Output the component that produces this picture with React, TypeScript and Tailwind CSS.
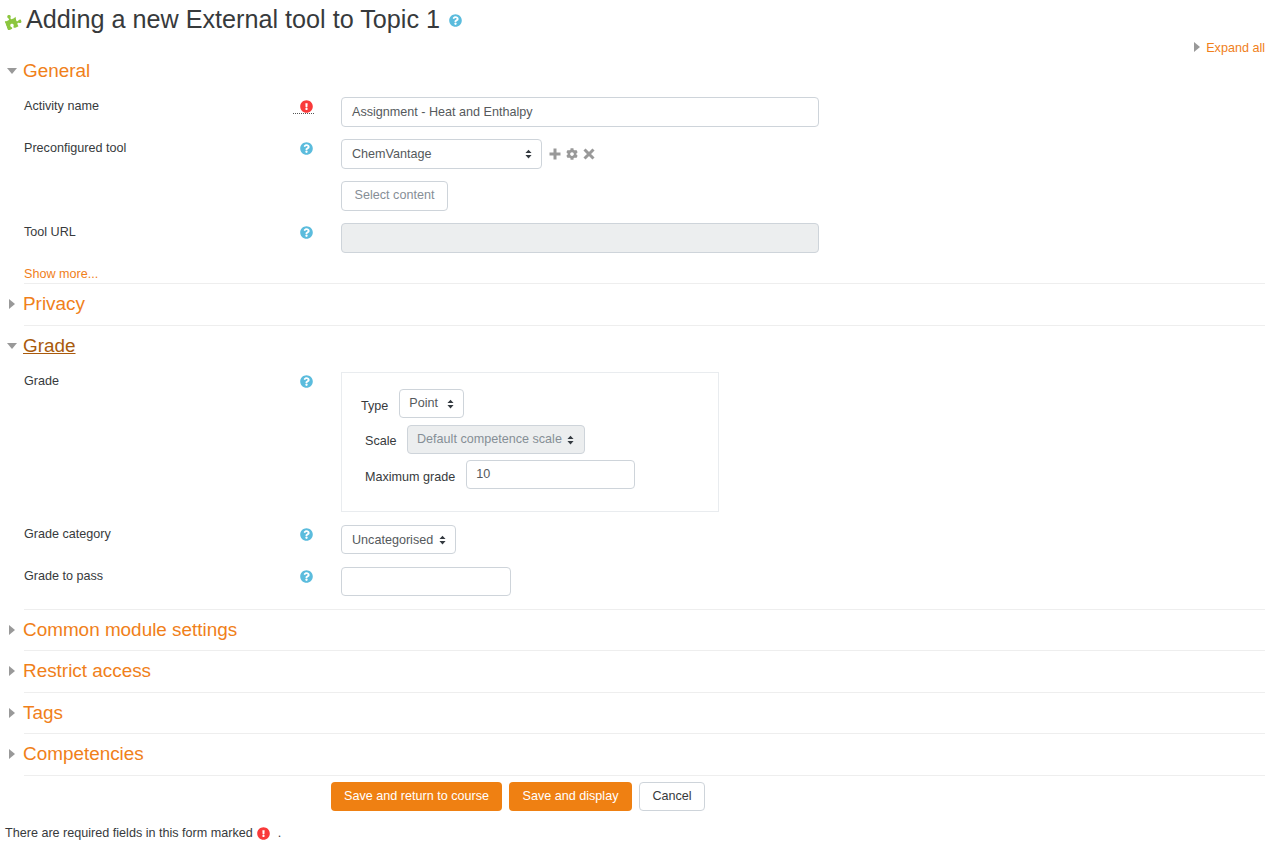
import { FaCog, FaExclamationCircle, FaPuzzlePiece, FaQuestionCircle } from "react-icons/fa";

function Help() {
  return <FaQuestionCircle size={13} className="text-[#5bbcdd]" />;
}

function Arrows() {
  return (
    <svg width="7" height="10" viewBox="0 0 8 11" className="shrink-0">
      <path d="M4 0.5 L7.5 4.3 H0.5 Z M4 10.5 L0.5 6.7 H7.5 Z" fill="#343a40" />
    </svg>
  );
}

function Closed() {
  return (
    <svg width="6" height="10" viewBox="0 0 6 10" className="shrink-0 -mt-[1px]">
      <path d="M0 0 L6 5 L0 10 Z" fill="#999" />
    </svg>
  );
}

function Open() {
  return (
    <svg width="10" height="6" viewBox="0 0 10 6" className="shrink-0">
      <path d="M0 0 H10 L5 6 Z" fill="#999" />
    </svg>
  );
}

function Section({ title, open, under, h }: { title: string; open?: boolean; under?: boolean; h: string }) {
  return (
    <div className={`flex items-center ${h}`}>
      <div className="w-[24px] flex justify-center shrink-0">
        {open ? <Open /> : <Closed />}
      </div>
      <span className={`text-[18.9px] -ml-[1px] ${under ? "text-[#a95a0c] underline" : "text-[#f0801a]"}`}>{title}</span>
    </div>
  );
}

function Row({ label, icon, children, cls }: { label: string; icon?: React.ReactNode; children: React.ReactNode; cls?: string }) {
  return (
    <div className={`flex pl-[24px] ${cls ?? ""}`}>
      <div className="w-[276px] pt-[1px] leading-[17px] shrink-0">{label}</div>
      <div className="w-[41px] shrink-0 pt-[2.5px]">{icon ?? <Help />}</div>
      <div>{children}</div>
    </div>
  );
}

export default function App() {
  return (
    <div className="w-[1272px] h-[846px] overflow-hidden bg-white text-[12.6px] text-[#373a3c] font-['Liberation_Sans',Arial,sans-serif]">
      <div className="flex items-center h-[38px] pl-[5px]">
        <FaPuzzlePiece size={16} className="text-[#8cc63f] mt-[3px] -rotate-[20deg]" />
        <h1 className="text-[25.2px] ml-[5px] leading-[38px]">Adding a new External tool to Topic 1</h1>
        <div className="ml-[9px] mt-[2px]"><FaQuestionCircle size={13} className="text-[#5bbcdd]" /></div>
      </div>

      <div className="flex justify-end items-center gap-[6px] h-[18px] mr-[7px]">
        <Closed />
        <span className="text-[#f0801a] mt-[3px]">Expand all</span>
      </div>

      <div className="pr-[7px]">
        <Section title="General" open h="h-[30px]" />
        <div className="pt-[11px]">
          <Row
            label="Activity name"
            icon={
              <div className="-ml-[7px] -mt-[3px] w-[21px] h-[17px] pt-[3px] border-b border-dotted border-[#555] flex justify-center">
                <FaExclamationCircle size={13} className="text-[#f93a3a] ml-[6px]" />
              </div>
            }
          >
            <div className="w-[478px] h-[30px] border border-[#ced4da] rounded-[4px] flex items-center px-[10px] text-[#55595c]">
              Assignment - Heat and Enthalpy
            </div>
          </Row>
          <Row label="Preconfigured tool" cls="mt-[12px]">
            <div className="flex items-center">
              <div className="w-[201px] h-[30px] border border-[#ced4da] rounded-[4px] flex items-center justify-between pl-[10px] pr-[9px] text-[#55595c]">
                ChemVantage
                <Arrows />
              </div>
              <div className="flex items-center gap-[5px] ml-[7px]">
                <svg width="12" height="12" viewBox="0 0 12 12">
                  <path d="M6 0.5 V11.5 M0.5 6 H11.5" stroke="#999" strokeWidth="3" />
                </svg>
                <FaCog size={12} className="text-[#999]" />
                <svg width="12" height="12" viewBox="0 0 12 12">
                  <path d="M1.5 1.5 L10.5 10.5 M10.5 1.5 L1.5 10.5" stroke="#999" strokeWidth="3" />
                </svg>
              </div>
            </div>
            <div className="mt-[12px] w-[107px] h-[30px] border border-[#ced4da] rounded-[4px] flex items-center justify-center text-[#868e96]">
              <span className="-mt-[1px]">Select content</span>
            </div>
          </Row>
          <Row label="Tool URL" cls="mt-[12px]">
            <div className="w-[478px] h-[30px] border border-[#ced4da] rounded-[4px] bg-[#eceeef]" />
          </Row>
        </div>
        <div className="pl-[24px] pt-[1px] mt-[12px] h-[18px] leading-[17px] text-[#f0801a]">Show more...</div>

        <div className="ml-[24px] border-t border-[#eee]" />
        <Section title="Privacy" h="h-[41px]" />
        <div className="ml-[24px] border-t border-[#eee]" />
        <Section title="Grade" open under h="h-[40px]" />

        <Row label="Grade" cls="mt-[6px]">
          <div className="w-[378px] h-[140px] border border-[#e9ecef] pl-[19px] pt-[16px]">
            <div className="flex items-center h-[29px]">
              <span className="mt-[5px]">Type</span>
              <div className="ml-[11px] w-[65px] h-[29px] border border-[#ced4da] rounded-[4px] flex items-center justify-between pl-[9px] pr-[9px] text-[#55595c]">
                <span>Point</span>
                <Arrows />
              </div>
            </div>
            <div className="flex items-center h-[29px] mt-[7px] pl-[4px]">
              <span className="mt-[4px]">Scale</span>
              <div className="ml-[10px] w-[178px] h-[29px] border border-[#ced4da] rounded-[4px] bg-[#eceeef] flex items-center justify-between pl-[9.5px] pr-[10px] text-[#868e96]">
                <span className="-mt-[1px] whitespace-nowrap">Default competence scale</span>
                <Arrows />
              </div>
            </div>
            <div className="flex items-center h-[29px] mt-[6px] pl-[4px]">
              <span className="mt-[5px]">Maximum grade</span>
              <div className="ml-[11px] w-[169px] h-[29px] border border-[#ced4da] rounded-[4px] flex items-center px-[9px] text-[#55595c]">
                <span>10</span>
              </div>
            </div>
          </div>
        </Row>
        <Row label="Grade category" cls="mt-[13px]">
          <div className="w-[115px] h-[29px] border border-[#ced4da] rounded-[4px] flex items-center justify-between pl-[10px] pr-[9px] text-[#55595c]">
            <span className="mt-[2px]">Uncategorised</span>
            <Arrows />
          </div>
        </Row>
        <Row label="Grade to pass" cls="mt-[13px]">
          <div className="w-[170px] h-[29px] border border-[#ced4da] rounded-[4px]" />
        </Row>

        <div className="ml-[24px] mt-[13px] border-t border-[#eee]" />
        <Section title="Common module settings" h="h-[40px]" />
        <div className="ml-[24px] border-t border-[#eee]" />
        <Section title="Restrict access" h="h-[41px]" />
        <div className="ml-[24px] border-t border-[#eee]" />
        <Section title="Tags" h="h-[40px]" />
        <div className="ml-[24px] border-t border-[#eee]" />
        <Section title="Competencies" h="h-[41px]" />
        <div className="ml-[24px] border-t border-[#eee]" />
      </div>

      <div className="flex gap-[7px] pl-[331px] mt-[6px]">
        <div className="w-[171px] h-[29px] rounded-[4px] bg-[#ef8012] text-white flex items-center justify-center"><span>Save and return to course</span></div>
        <div className="w-[123px] h-[29px] rounded-[4px] bg-[#ef8012] text-white flex items-center justify-center"><span>Save and display</span></div>
        <div className="w-[66px] h-[29px] rounded-[4px] border border-[#ced4da] flex items-center justify-center"><span>Cancel</span></div>
      </div>

      <div className="flex items-center pl-[5px] mt-[14px] h-[17px]">
        There are required fields in this form marked
        <FaExclamationCircle size={13} className="text-[#f93a3a] ml-[4px]" />
        <span className="ml-[8px]">.</span>
      </div>
    </div>
  );
}
